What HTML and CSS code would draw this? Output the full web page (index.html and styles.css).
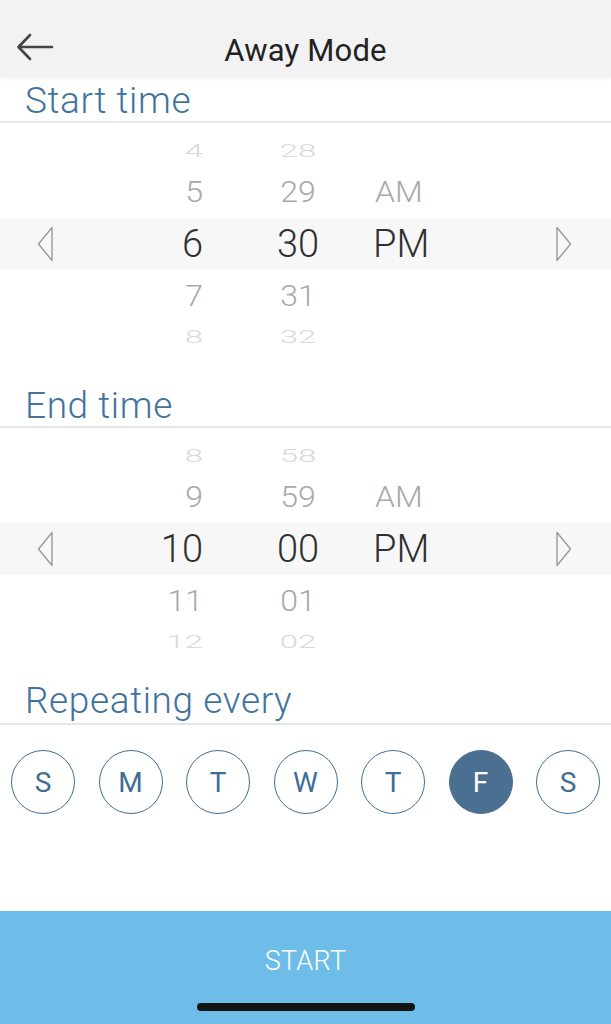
FILE: index.html
```html
<!DOCTYPE html>
<html lang="en">
<head>
<meta charset="utf-8">
<title>Away Mode</title>
<link rel="stylesheet" href="styles.css">
</head>
<body>
<div class="screen">
  <header class="topbar">
    <div class="nav">
      <button class="back" aria-label="Back">
        <svg width="38" height="28" viewBox="0 0 38 28"><path d="M36 14H3M14 2L2.5 14L14 26" fill="none" stroke="#444" stroke-width="2.6" stroke-linecap="round" stroke-linejoin="round"/></svg>
      </button>
      <h1 class="title">Away Mode</h1>
      <span class="nav-spacer"></span>
    </div>
  </header>

  <h2 class="section-title">Start time</h2>
  <div class="picker">
    <div class="wheel-row far"><span class="hour">4</span><span class="min">28</span></div>
    <div class="wheel-row near"><span class="hour">5</span><span class="min">29</span><span class="ampm">AM</span></div>
    <div class="wheel-row selected">
      <span class="arrow-l"><svg width="16" height="36" viewBox="0 0 16 36"><path d="M15 1.5L1.5 18L15 34.5Z" fill="none" stroke="#9a9a9a" stroke-width="1.4" stroke-linejoin="round"/></svg></span>
      <span class="hour">6</span><span class="min">30</span><span class="ampm">PM</span>
      <span class="arrow-r"><svg width="16" height="36" viewBox="0 0 16 36"><path d="M1 1.5L14.5 18L1 34.5Z" fill="none" stroke="#9a9a9a" stroke-width="1.4" stroke-linejoin="round"/></svg></span>
    </div>
    <div class="wheel-row near"><span class="hour">7</span><span class="min">31</span></div>
    <div class="wheel-row far bottom"><span class="hour">8</span><span class="min">32</span></div>
  </div>

  <h2 class="section-title">End time</h2>
  <div class="picker picker--last">
    <div class="wheel-row far"><span class="hour">8</span><span class="min">58</span></div>
    <div class="wheel-row near"><span class="hour">9</span><span class="min">59</span><span class="ampm">AM</span></div>
    <div class="wheel-row selected">
      <span class="arrow-l"><svg width="16" height="36" viewBox="0 0 16 36"><path d="M15 1.5L1.5 18L15 34.5Z" fill="none" stroke="#9a9a9a" stroke-width="1.4" stroke-linejoin="round"/></svg></span>
      <span class="hour">10</span><span class="min">00</span><span class="ampm">PM</span>
      <span class="arrow-r"><svg width="16" height="36" viewBox="0 0 16 36"><path d="M1 1.5L14.5 18L1 34.5Z" fill="none" stroke="#9a9a9a" stroke-width="1.4" stroke-linejoin="round"/></svg></span>
    </div>
    <div class="wheel-row near"><span class="hour">11</span><span class="min">01</span></div>
    <div class="wheel-row far bottom"><span class="hour">12</span><span class="min">02</span></div>
  </div>

  <h2 class="section-title section-title--repeat">Repeating every</h2>
  <div class="days">
    <span class="day">S</span>
    <span class="day">M</span>
    <span class="day">T</span>
    <span class="day">W</span>
    <span class="day">T</span>
    <span class="day active">F</span>
    <span class="day">S</span>
  </div>

  <div class="fill"></div>

  <footer class="start-bar">
    <span class="start-label">START</span>
    <span class="home-indicator"></span>
  </footer>
</div>
</body>
</html>
```

FILE: styles.css
```css
html, body {
  margin: 0;
  padding: 0;
  background: #ffffff;
}

body {
  font-family: Roboto, "Liberation Sans", Arial, sans-serif;
}

.screen {
  width: 611px;
  height: 1024px;
  display: flex;
  flex-direction: column;
  overflow: hidden;
}

.topbar {
  height: 77px;
  box-sizing: border-box;
  padding-top: 24px;
  background: #f2f2f2;
  box-shadow: 0 1px 4px rgba(0, 0, 0, 0.08);
  position: relative;
  z-index: 1;
  flex: none;
}

.nav {
  height: 53px;
  display: grid;
  grid-template-columns: 90px 1fr 90px;
  align-items: center;
}

.back {
  border: 0;
  background: transparent;
  padding: 0 0 0 16px;
  margin-top: -7px;
  display: flex;
  align-items: center;
  justify-self: start;
}

.title {
  margin: 0;
  text-align: center;
  font-size: 31px;
  font-weight: 400;
  color: #222222;
  line-height: 53px;
  letter-spacing: 0.2px;
}

.section-title {
  margin: 0;
  height: 46px;
  box-sizing: border-box;
  padding: 2px 0 0 25px;
  line-height: 44px;
  font-size: 37px;
  font-weight: 300;
  letter-spacing: 0.6px;
  color: #41739c;
  border-bottom: 2px solid #e6e6e6;
  flex: none;
}

.section-title--repeat {
  height: 48px;
}

.picker {
  flex: none;
  padding: 13px 0 32px;
}

.picker--last {
  padding-bottom: 22px;
}

.wheel-row {
  display: grid;
  grid-template-columns: 60px 143px 51px 88px 33px 1fr 60px;
  align-items: center;
  height: 52px;
  font-weight: 300;
}

.wheel-row > span {
  display: block;
  line-height: 52px;
}

.hour { grid-column: 2; text-align: right; }
.min { grid-column: 4; text-align: center; }
.ampm { grid-column: 6; text-align: left; }
.arrow-l { grid-column: 1; justify-self: start; margin-left: 37px; }
.arrow-r { grid-column: 7; justify-self: end; margin-right: 39px; }

.arrow-l, .arrow-r {
  display: flex !important;
  align-items: center;
  height: 52px;
}

.wheel-row.far {
  height: 30px;
  font-size: 33px;
  color: #d9d9d9;
}

.wheel-row.far.bottom {
  height: 28px;
}

.wheel-row.far > span {
  line-height: 30px;
  transform: scaleY(0.55);
}

.wheel-row.near {
  font-size: 32px;
  color: #a9a9a9;
}

.wheel-row.near > span {
  transform: scaleY(0.92);
}

.wheel-row.selected {
  background: #f7f7f7;
  font-size: 38px;
  color: #303030;
}

.wheel-row.selected .ampm {
  margin-left: -2px;
}

.days {
  flex: none;
  display: flex;
  justify-content: space-between;
  padding: 25px 11px 0;
}

.day {
  width: 64px;
  height: 64px;
  box-sizing: border-box;
  border: 1.5px solid #3f6f99;
  border-radius: 50%;
  display: flex;
  align-items: center;
  justify-content: center;
  font-size: 28px;
  font-weight: 400;
  color: #3f6e96;
}

.day.active {
  background: #4a6f91;
  border-color: #4a6f91;
  color: #ffffff;
}

.fill {
  flex: 1;
}

.start-bar {
  flex: none;
  height: 113px;
  box-sizing: border-box;
  background: #6ebce8;
  display: flex;
  flex-direction: column;
  align-items: center;
  padding-top: 35px;
}

.start-label {
  font-size: 27px;
  font-weight: 300;
  line-height: 30px;
  letter-spacing: 0.3px;
  color: #ffffff;
}

.home-indicator {
  margin-top: 27px;
  width: 218px;
  height: 8px;
  border-radius: 4px;
  background: #141414;
}
```
